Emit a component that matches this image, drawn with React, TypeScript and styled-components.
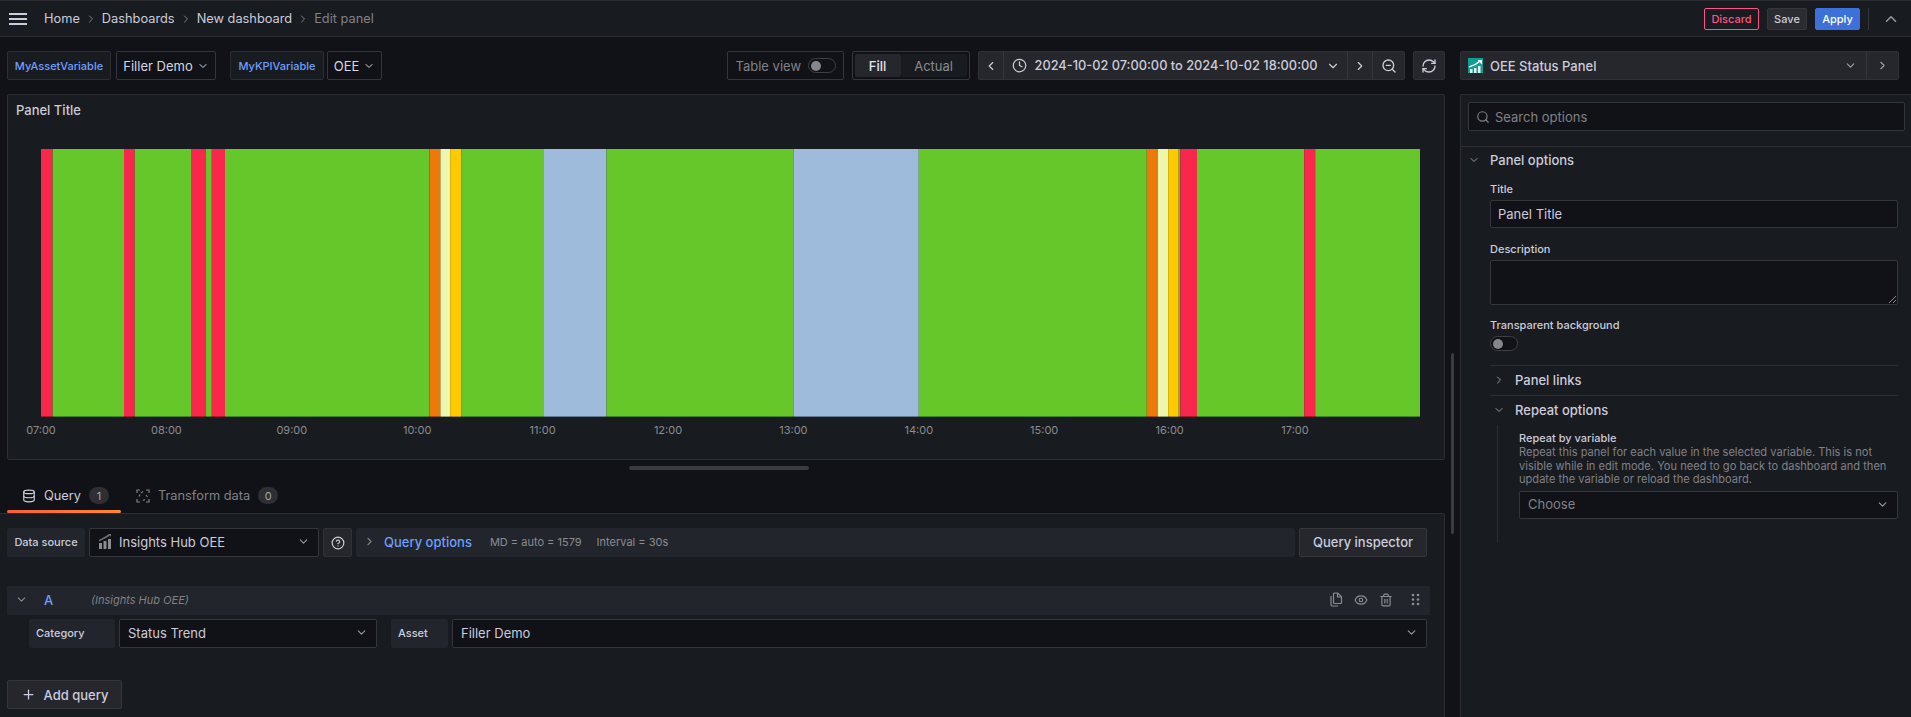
import React from 'react'
import styled, { createGlobalStyle } from 'styled-components'
import {
    ChevronDown,
    ChevronLeft,
    ChevronRight,
    ChevronUp,
    Clock,
    CircleHelp,
    Database,
    Eye,
    Plus,
    RefreshCw,
    Search,
    Trash2,
    ZoomOut,
} from 'lucide-react'

const GlobalStyle = createGlobalStyle`
    html, body {
        margin: 0;
        height: 100%;
        background: #111217;
        overflow: hidden;
    }
    body {
        font-family: Inter, "Noto Sans", sans-serif;
        font-size: 13px;
        color: #ccccdc;
    }
    * {
        box-sizing: border-box;
    }
`

const Page = styled.div`
    position: relative;
    width: 1911px;
    height: 717px;
    overflow: hidden;
    background: #111217;
`

const TopBar = styled.header`
    height: 37px;
    padding: 0 9px;
    display: flex;
    align-items: center;
    background: #181b1f;
    border-top: 1px solid #2a2c31;
    border-bottom: 1px solid #2a2c31;
`

const Hamburger = styled.svg`
    width: 18px;
    height: 12px;
    margin-right: 17px;
    flex: none;
`

const Crumb = styled.span<{ $current?: boolean }>`
    font-size: 12.8px;
    color: ${(p) => (p.$current ? '#808187' : '#ccccdc')};
`

const CrumbSep = styled.span`
    display: flex;
    width: 22px;
    justify-content: center;
    color: #7e8085;
`

const TopActions = styled.div`
    margin-left: auto;
    display: flex;
    align-items: center;
    padding-right: 2px;
`

const TopButton = styled.button<{ $kind: 'danger' | 'plain' | 'primary' }>`
    height: 22px;
    margin-right: 8px;
    padding: 0;
    width: ${(p) => (p.$kind === 'danger' ? '55px' : p.$kind === 'plain' ? '40px' : '45px')};
    font: 500 11px Inter, sans-serif;
    border-radius: 2px;
    color: ${(p) => (p.$kind === 'danger' ? '#ff5286' : p.$kind === 'plain' ? '#ccccdc' : '#ffffff')};
    background: ${(p) => (p.$kind === 'danger' ? 'transparent' : p.$kind === 'plain' ? '#2a2c31' : '#3d71d9')};
    border: 1px solid ${(p) => (p.$kind === 'danger' ? '#ff5286' : p.$kind === 'plain' ? '#33353a' : '#3d71d9')};
`

const TopDivider = styled.span`
    width: 1px;
    height: 22px;
    background: #35373c;
    margin-right: 13px;
`

const Body = styled.div`
    display: grid;
    grid-template-columns: 1438px 451px;
    column-gap: 15px;
    padding: 14px 0 0 7px;
`

const LeftColumn = styled.div`
    display: flex;
    flex-direction: column;
    min-width: 0;
`

const RightColumn = styled.div`
    display: flex;
    flex-direction: column;
    min-width: 0;
`

const Toolbar = styled.div`
    height: 29px;
    display: flex;
    align-items: stretch;
`

const VarLabel = styled.div<{ $w: number; $before?: number }>`
    width: ${(p) => p.$w}px;
    margin-left: ${(p) => p.$before ?? 0}px;
    display: flex;
    align-items: center;
    justify-content: center;
    font-size: 11px;
    font-weight: 500;
    color: #6e9fff;
    background: #181b1f;
    border: 1px solid #2c2e33;
    border-radius: 2px;
`

const VarValue = styled.div<{ $w: number; $after: number }>`
    width: ${(p) => p.$w}px;
    margin-left: ${(p) => p.$after}px;
    display: flex;
    align-items: center;
    justify-content: center;
    gap: 4px;
    font-size: 13px;
    color: #d6d6e2;
    background: #111217;
    border: 1px solid #34363b;
    border-radius: 2px;
`

const Spacer = styled.div`
    flex: 1;
`

const TableToggle = styled.div`
    width: 117px;
    display: flex;
    align-items: center;
    padding-left: 8px;
    font-size: 13px;
    color: #808187;
    border: 1px solid #34363b;
    border-radius: 2px;
    margin-right: 8px;
`

const Switch = styled.span<{ $ml: number }>`
    display: flex;
    align-items: center;
    width: 28px;
    height: 15px;
    margin-left: ${(p) => p.$ml}px;
    padding-left: 2px;
    border: 1px solid #3e4045;
    border-radius: 8px;
    background: #111217;
    &::before {
        content: '';
        width: 10px;
        height: 10px;
        border-radius: 50%;
        background: #85858e;
    }
`

const Segmented = styled.div`
    width: 118px;
    display: flex;
    padding: 2px;
    border: 1px solid #34363b;
    border-radius: 2px;
    margin-right: 8px;
`

const SegmentItem = styled.div<{ $active?: boolean; $w: number }>`
    width: ${(p) => p.$w}px;
    display: flex;
    align-items: center;
    justify-content: center;
    font-size: 13px;
    font-weight: ${(p) => (p.$active ? 500 : 400)};
    color: ${(p) => (p.$active ? '#e4e4ec' : '#8a8b91')};
    background: ${(p) => (p.$active ? '#25272c' : '#181b1f')};
    border-radius: 2px;
`

const ButtonGroup = styled.div`
    display: flex;
    background: #25272c;
    border: 1px solid #2f3136;
    border-radius: 2px;
    color: #ccccdc;
`

const GroupCell = styled.div<{ $w: number }>`
    width: ${(p) => p.$w}px;
    display: flex;
    align-items: center;
    justify-content: center;
    & + & {
        border-left: 1px solid #34363b;
    }
`

const TimeCell = styled.div`
    width: 345.5px;
    display: flex;
    align-items: center;
    padding-left: 8px;
    gap: 8px;
    font-size: 12.8px;
    font-weight: 500;
    border-left: 1px solid #34363b;
    border-right: 1px solid #34363b;
    white-space: nowrap;
    & > svg {
        flex: none;
    }
`

const IconButton = styled.div`
    width: 32px;
    margin-left: 8px;
    display: flex;
    align-items: center;
    justify-content: center;
    background: #25272c;
    border: 1px solid #2f3136;
    border-radius: 2px;
    color: #ccccdc;
`

const VizPanel = styled.section`
    height: 366px;
    margin-top: 14px;
    padding: 7px 8px;
    background: #181b1f;
    border: 1px solid #2c2e33;
    border-radius: 2px;
`

const PanelTitle = styled.div`
    font-size: 13px;
    font-weight: 500;
    line-height: 16px;
    color: #ccccdc;
`

const ChartSvg = styled.svg`
    display: block;
    margin: 31px 0 0 -8px;
`

const ChartLabel = styled.text`
    font: 11px Inter, sans-serif;
    fill: #8b8c92;
`

const Resizer = styled.div`
    height: 4px;
    width: 180px;
    margin: 6px 0 0 622px;
    border-radius: 2px;
    background: #393b40;
`

const Tabs = styled.nav`
    height: 43px;
    display: flex;
    align-items: stretch;
`

const Tab = styled.div<{ $active?: boolean; $w: number; $pad: number }>`
    position: relative;
    width: ${(p) => p.$w}px;
    padding: 8px 0 0 ${(p) => p.$pad}px;
    display: flex;
    align-items: center;
    gap: 8px;
    font-size: 12.8px;
    color: ${(p) => (p.$active ? '#ccccdc' : '#808187')};
    &::after {
        content: '';
        display: ${(p) => (p.$active ? 'block' : 'none')};
        position: absolute;
        left: 0;
        right: 0;
        bottom: 0;
        height: 3px;
        background: linear-gradient(90deg, #f55f3e, #ff8833);
        border-radius: 2px;
    }
`

const Counter = styled.span`
    display: flex;
    align-items: center;
    justify-content: center;
    width: 20px;
    height: 17px;
    border-radius: 9px;
    font-size: 11px;
    color: #a5a6ae;
    background: #2d2f34;
`

const QueryPane = styled.section`
    height: 210px;
    margin-left: -7px;
    padding: 14px 17px 0 7px;
    background: #181b1f;
    border-top: 1px solid #2c2e33;
    border-right: 1px solid #2c2e33;
    border-top-right-radius: 2px;
`

const Row = styled.div<{ $gap: number; $top?: number; $left?: number }>`
    height: 29px;
    display: flex;
    align-items: stretch;
    gap: ${(p) => p.$gap}px;
    margin-top: ${(p) => p.$top ?? 0}px;
    margin-left: ${(p) => p.$left ?? 0}px;
`

const FieldLabel = styled.div<{ $w: number; $center?: boolean; $before?: number }>`
    width: ${(p) => p.$w}px;
    margin-left: ${(p) => p.$before ?? 0}px;
    flex: none;
    display: flex;
    align-items: center;
    justify-content: ${(p) => (p.$center ? 'center' : 'flex-start')};
    padding: 0 0 2px ${(p) => (p.$center ? 0 : 7)}px;
    font-size: 11px;
    font-weight: 500;
    color: #ccccdc;
    background: #22252b;
    border-radius: 2px;
`

const SelectBox = styled.div<{ $w?: number; $placeholder?: boolean; $h?: number }>`
    width: ${(p) => (p.$w ? `${p.$w}px` : 'auto')};
    height: ${(p) => (p.$h ? `${p.$h}px` : 'auto')};
    flex: ${(p) => (p.$w ? 'none' : '1')};
    display: flex;
    align-items: center;
    padding: 0 8px 2px;
    gap: 7px;
    font-size: 13px;
    color: ${(p) => (p.$placeholder ? '#808187' : '#ccccdc')};
    background: #111217;
    border: 1px solid #34363b;
    border-radius: 2px;
    & > svg:last-child {
        margin-left: auto;
        color: #9a9ba1;
    }
`

const HelpBox = styled.div`
    width: 29px;
    flex: none;
    display: flex;
    align-items: center;
    justify-content: center;
    background: #25272c;
    border: 1px solid #2f3136;
    border-radius: 2px;
`

const OptionsBar = styled.div`
    flex: 1;
    display: flex;
    align-items: center;
    background: #22252b;
    border-radius: 2px;
    padding: 0 0 2px 7px;
    color: #808187;
`

const OptionsLink = styled.span`
    margin: 0 18px 0 8px;
    font-size: 13px;
    font-weight: 500;
    color: #6e9fff;
`

const OptionsInfo = styled.span`
    margin-right: 15px;
    font-size: 11px;
    color: #8b8c92;
`

const GhostButton = styled.div`
    width: 128px;
    flex: none;
    display: flex;
    align-items: center;
    justify-content: center;
    padding-bottom: 2px;
    font-size: 13px;
    font-weight: 500;
    color: #ccccdc;
    background: #25272c;
    border: 1px solid #34363b;
    border-radius: 2px;
`

const QueryHeader = styled.div`
    height: 29px;
    margin-top: 29px;
    margin-right: -3px;
    padding: 0 10px 2px 8px;
    display: flex;
    align-items: center;
    background: #22252b;
    color: #8b8c92;
`

const RefLetter = styled.span`
    margin-left: 16px;
    width: 47px;
    font-size: 13px;
    font-weight: 500;
    color: #6e9fff;
`

const DsName = styled.span`
    font-size: 11px;
    font-style: italic;
    color: #808187;
`

const HeaderIcons = styled.div`
    margin-left: auto;
    display: flex;
    align-items: center;
    gap: 11px;
`

const DragDotsSvg = styled.svg`
    margin-left: 7px;
`

const AddButton = styled.div`
    width: 115px;
    height: 29px;
    margin-top: 32px;
    display: flex;
    align-items: center;
    justify-content: center;
    gap: 8px;
    font-size: 13px;
    font-weight: 500;
    color: #ccccdc;
    background: #25272c;
    border: 1px solid #34363b;
    border-radius: 2px;
`

const VizPicker = styled.div`
    height: 29px;
    display: flex;
    align-items: center;
    background: #25272c;
    border: 1px solid #2f3136;
    border-radius: 2px;
    padding-left: 7px;
    margin-right: 12px;
    font-size: 13px;
    font-weight: 500;
`

const VizPickerName = styled.span`
    margin-left: 7px;
    flex: 1;
`

const VizPickerChevron = styled.span<{ $split?: boolean }>`
    width: 32px;
    align-self: stretch;
    display: flex;
    align-items: center;
    justify-content: center;
    color: #a0a1a7;
    border-left: ${(p) => (p.$split ? '1px solid #34363b' : 'none')};
`

const OptionsPanel = styled.aside`
    height: 640px;
    margin-top: 14px;
    background: #181b1f;
    border: 1px solid #2c2e33;
    border-right: none;
    border-radius: 2px 0 0 0;
`

const SearchWrap = styled.div`
    height: 52px;
    padding: 7px 6px 0 7px;
    border-bottom: 1px solid #2c2e33;
`

const SearchBox = styled.div`
    height: 29px;
    display: flex;
    align-items: center;
    gap: 5px;
    padding-left: 7px;
    font-size: 13px;
    color: #808187;
    background: #111217;
    border: 1px solid #34363b;
    border-radius: 2px;
`

const GroupHead = styled.div<{ $h: number }>`
    height: ${(p) => p.$h}px;
    display: flex;
    align-items: center;
    padding-left: 5px;
    font-size: 13px;
    font-weight: 500;
    color: #ccccdc;
    & > svg {
        width: 16px;
        margin-right: 8px;
        color: #9a9ba1;
    }
`

const GroupBody = styled.div`
    padding: 0 13px 0 29px;
`

const OptLabel = styled.div<{ $top: number }>`
    margin-top: ${(p) => p.$top}px;
    margin-bottom: 4px;
    font-size: 11px;
    line-height: 14px;
    font-weight: 500;
    color: #ccccdc;
`

const TextBox = styled.div`
    height: 28px;
    display: flex;
    align-items: center;
    padding: 0 7px 1px;
    font-size: 13px;
    color: #ccccdc;
    background: #111217;
    border: 1px solid #34363b;
    border-radius: 2px;
`

const TextArea = styled.div`
    position: relative;
    height: 45px;
    background: #111217;
    border: 1px solid #34363b;
    border-radius: 2px;
`

const ResizeGrip = styled.svg`
    position: absolute;
    right: 1px;
    bottom: 1px;
`

const Rule = styled.div<{ $top?: number }>`
    height: 1px;
    margin-top: ${(p) => p.$top ?? 0}px;
    background: #2c2e33;
`

const SubHead = styled.div`
    height: 29px;
    display: flex;
    align-items: center;
    padding: 0 0 2px 1px;
    font-size: 13px;
    font-weight: 500;
    color: #ccccdc;
    & > svg {
        width: 16px;
        margin-right: 8px;
        color: #9a9ba1;
    }
`

const RepeatBody = styled.div`
    height: 117px;
    margin-left: 7px;
    padding: 6px 0 0 21px;
    border-left: 1px solid #2c2e33;
`

const RepeatLabel = styled.div`
    font-size: 11px;
    line-height: 14px;
    font-weight: 500;
    color: #ccccdc;
`

const RepeatHelp = styled.div`
    margin: 1px 0 4.5px;
    font-size: 11.1px;
    line-height: 13.5px;
    color: #808187;
`

const PageScrollbar = styled.div`
    position: absolute;
    left: 1451px;
    top: 353px;
    width: 3px;
    height: 181px;
    border-radius: 2px;
    background: #393b40;
`

type Segment = { end: number; color: string }

const CHART_LEFT = 41
const CHART_RIGHT = 1420
const SVG_ORIGIN = 8

const SEGMENTS: Segment[] = [
    { end: 52.6, color: '#f9274b' },
    { end: 124, color: '#66c72a' },
    { end: 134.7, color: '#f9274b' },
    { end: 191, color: '#66c72a' },
    { end: 205.7, color: '#f9274b' },
    { end: 211.8, color: '#66c72a' },
    { end: 225, color: '#f9274b' },
    { end: 429.4, color: '#66c72a' },
    { end: 440.4, color: '#ec7908' },
    { end: 450.2, color: '#ebf7ae' },
    { end: 461.2, color: '#ffcb00' },
    { end: 544, color: '#66c72a' },
    { end: 606.5, color: '#9fbbdb' },
    { end: 793.8, color: '#66c72a' },
    { end: 918.8, color: '#9fbbdb' },
    { end: 1146.8, color: '#66c72a' },
    { end: 1157.8, color: '#ec7908' },
    { end: 1168.2, color: '#ebf7ae' },
    { end: 1178.7, color: '#ffcb00' },
    { end: 1180.3, color: '#66c72a' },
    { end: 1197, color: '#f9274b' },
    { end: 1304.2, color: '#66c72a' },
    { end: 1315.2, color: '#f9274b' },
    { end: 1420, color: '#66c72a' },
]

const TICKS = ['07:00', '08:00', '09:00', '10:00', '11:00', '12:00', '13:00', '14:00', '15:00', '16:00', '17:00']

const StatusChart = () => {
    let start = CHART_LEFT
    return (
        <ChartSvg width={1436} height={300} viewBox="0 0 1436 300">
            {SEGMENTS.map((s) => {
                const x = start - SVG_ORIGIN
                const w = s.end - start
                start = s.end
                return <rect key={s.end} x={x} y={0} width={w} height={268} fill={s.color} />
            })}
            <rect x={CHART_LEFT - SVG_ORIGIN} y={267} width={CHART_RIGHT - CHART_LEFT} height={1} fill="#000" opacity={0.35} />
            {TICKS.map((t, i) => (
                <ChartLabel key={t} x={CHART_LEFT - SVG_ORIGIN + i * 125.4} y={285} textAnchor="middle">
                    {t}
                </ChartLabel>
            ))}
        </ChartSvg>
    )
}

const OeeLogo = () => (
    <svg width="15" height="15" viewBox="0 0 15 15">
        <rect width="15" height="15" fill="#0f9d94" />
        <path d="M1 9 C4 8 8 7 12 3" fill="none" stroke="#fff" strokeWidth="1.400" />
        <path d="M9.500 2 H14 V6.500 Z" fill="#fff" />
        <path d="M2 11h2.500v4H2zM6 10h2.500v5H6zM10 8h2.500v7H10z" fill="#dff3f1" />
    </svg>
)

const BarsIcon = () => (
    <svg width="14" height="15" viewBox="0 0 14 15">
        <path d="M1 9h3v6H1zM5.500 7h3v8h-3zM10 5h3v10h-3z" fill="#8b8c92" />
        <path d="M1 6 L8 2 L11 0 L13 0 L13 3 L12 1.500 L8 4 L1 7.500 Z" fill="#6e6f75" />
    </svg>
)

const CopyIcon = () => (
    <svg width="14" height="15" viewBox="0 0 14 15" fill="none" stroke="currentColor" strokeWidth="1.200">
        <path d="M5.500 1h3.200L12.500 4.800v5.700a1 1 0 0 1-1 1h-6a1 1 0 0 1-1-1V2a1 1 0 0 1 1-1z" />
        <path d="M8.500 1v4h4" />
        <path d="M2 4v8.500a1.500 1.500 0 0 0 1.500 1.500h5.500" />
    </svg>
)

const DragDots = () => (
    <DragDotsSvg width="9" height="13" viewBox="0 0 9 13" fill="#8b8c92">
        <circle cx="2" cy="2" r="1.300" />
        <circle cx="7" cy="2" r="1.300" />
        <circle cx="2" cy="6.500" r="1.300" />
        <circle cx="7" cy="6.500" r="1.300" />
        <circle cx="2" cy="11" r="1.300" />
        <circle cx="7" cy="11" r="1.300" />
    </DragDotsSvg>
)

const TransformIcon = () => (
    <svg width="14" height="14" viewBox="0 0 14 14" fill="none" stroke="#808187" strokeWidth="1.200">
        <path d="M1 4V1h3M10 1h3v3M13 10v3h-3M4 13H1v-3" />
        <path d="M5 4l2-1.500M10 6l1.500 2M9 10.500l-2 1M3 7.500l1-2" />
    </svg>
)

const App = () => {
    return (
        <Page>
            <GlobalStyle />
            <TopBar>
                <Hamburger viewBox="0 0 18 12">
                    <path d="M0 1h18M0 6h18M0 11h18" stroke="#ccccdc" strokeWidth="2" />
                </Hamburger>
                <Crumb>Home</Crumb>
                <CrumbSep><ChevronRight size={12} /></CrumbSep>
                <Crumb>Dashboards</Crumb>
                <CrumbSep><ChevronRight size={12} /></CrumbSep>
                <Crumb>New dashboard</Crumb>
                <CrumbSep><ChevronRight size={12} /></CrumbSep>
                <Crumb $current>Edit panel</Crumb>
                <TopActions>
                    <TopButton $kind="danger">Discard</TopButton>
                    <TopButton $kind="plain">Save</TopButton>
                    <TopButton $kind="primary">Apply</TopButton>
                    <TopDivider />
                    <ChevronUp size={18} color="#9a9ba1" />
                </TopActions>
            </TopBar>
            <Body>
                <LeftColumn>
                    <Toolbar>
                        <VarLabel $w={104}>MyAssetVariable</VarLabel>
                        <VarValue $w={100} $after={5}>Filler Demo <ChevronDown size={12} /></VarValue>
                        <VarLabel $w={94} $before={14}>MyKPIVariable</VarLabel>
                        <VarValue $w={55} $after={3}>OEE <ChevronDown size={12} /></VarValue>
                        <Spacer />
                        <TableToggle>
                            Table view
                            <Switch $ml={7} />
                        </TableToggle>
                        <Segmented>
                            <SegmentItem $active $w={47}>Fill</SegmentItem>
                            <SegmentItem $w={67}>Actual</SegmentItem>
                        </Segmented>
                        <ButtonGroup>
                            <GroupCell $w={24}><ChevronLeft size={14} /></GroupCell>
                            <TimeCell>
                                <Clock size={15} />
                                2024-10-02 07:00:00 to 2024-10-02 18:00:00
                                <ChevronDown size={14} />
                            </TimeCell>
                            <GroupCell $w={24}><ChevronRight size={14} /></GroupCell>
                            <GroupCell $w={32}><ZoomOut size={16} /></GroupCell>
                        </ButtonGroup>
                        <IconButton><RefreshCw size={16} /></IconButton>
                    </Toolbar>
                    <VizPanel>
                        <PanelTitle>Panel Title</PanelTitle>
                        <StatusChart />
                    </VizPanel>
                    <Resizer />
                    <Tabs>
                        <Tab $active $w={114} $pad={15}>
                            <Database size={14} />
                            Query
                            <Counter>1</Counter>
                        </Tab>
                        <Tab $w={170} $pad={15}>
                            <TransformIcon />
                            Transform data
                            <Counter>0</Counter>
                        </Tab>
                    </Tabs>
                    <QueryPane>
                        <Row $gap={4}>
                            <FieldLabel $w={78} $center>Data source</FieldLabel>
                            <SelectBox $w={230}>
                                <BarsIcon />
                                Insights Hub OEE
                                <ChevronDown size={13} />
                            </SelectBox>
                            <HelpBox><CircleHelp size={14} /></HelpBox>
                            <OptionsBar>
                                <ChevronRight size={13} />
                                <OptionsLink>Query options</OptionsLink>
                                <OptionsInfo>MD = auto = 1579</OptionsInfo>
                                <OptionsInfo>Interval = 30s</OptionsInfo>
                            </OptionsBar>
                            <GhostButton>Query inspector</GhostButton>
                        </Row>
                        <QueryHeader>
                            <ChevronDown size={13} />
                            <RefLetter>A</RefLetter>
                            <DsName>(Insights Hub OEE)</DsName>
                            <HeaderIcons>
                                <CopyIcon />
                                <Eye size={14} />
                                <Trash2 size={14} />
                                <DragDots />
                            </HeaderIcons>
                        </QueryHeader>
                        <Row $gap={4} $top={4} $left={22}>
                            <FieldLabel $w={86}>Category</FieldLabel>
                            <SelectBox $w={258}>
                                Status Trend
                                <ChevronDown size={13} />
                            </SelectBox>
                            <FieldLabel $w={57} $before={10}>Asset</FieldLabel>
                            <SelectBox>
                                Filler Demo
                                <ChevronDown size={13} />
                            </SelectBox>
                        </Row>
                        <AddButton><Plus size={15} />Add query</AddButton>
                    </QueryPane>
                </LeftColumn>
                <RightColumn>
                    <VizPicker>
                        <OeeLogo />
                        <VizPickerName>OEE Status Panel</VizPickerName>
                        <VizPickerChevron><ChevronDown size={13} /></VizPickerChevron>
                        <VizPickerChevron $split><ChevronRight size={13} /></VizPickerChevron>
                    </VizPicker>
                    <OptionsPanel>
                        <SearchWrap>
                            <SearchBox><Search size={14} />Search options</SearchBox>
                        </SearchWrap>
                        <GroupHead $h={25}><ChevronDown size={12} />Panel options</GroupHead>
                        <GroupBody>
                            <OptLabel $top={10}>Title</OptLabel>
                            <TextBox>Panel Title</TextBox>
                            <OptLabel $top={14}>Description</OptLabel>
                            <TextArea>
                                <ResizeGrip width="7" height="7" viewBox="0 0 7 7">
                                    <path d="M0 7L7 0M4 7L7 4" stroke="#8b8c92" strokeWidth="1" />
                                </ResizeGrip>
                            </TextArea>
                            <OptLabel $top={13}>Transparent background</OptLabel>
                            <Switch $ml={0} />
                            <Rule $top={14} />
                            <SubHead><ChevronRight size={12} />Panel links</SubHead>
                            <Rule />
                            <SubHead><ChevronDown size={12} />Repeat options</SubHead>
                            <RepeatBody>
                                <RepeatLabel>Repeat by variable</RepeatLabel>
                                <RepeatHelp>
                                    Repeat this panel for each value in the selected variable. This is not visible
                                    while in edit mode. You need to go back to dashboard and then update the variable
                                    or reload the dashboard.
                                </RepeatHelp>
                                <SelectBox $placeholder $h={28}>
                                    Choose
                                    <ChevronDown size={13} />
                                </SelectBox>
                            </RepeatBody>
                        </GroupBody>
                    </OptionsPanel>
                </RightColumn>
            </Body>
            <PageScrollbar />
        </Page>
    )
}

export default App
